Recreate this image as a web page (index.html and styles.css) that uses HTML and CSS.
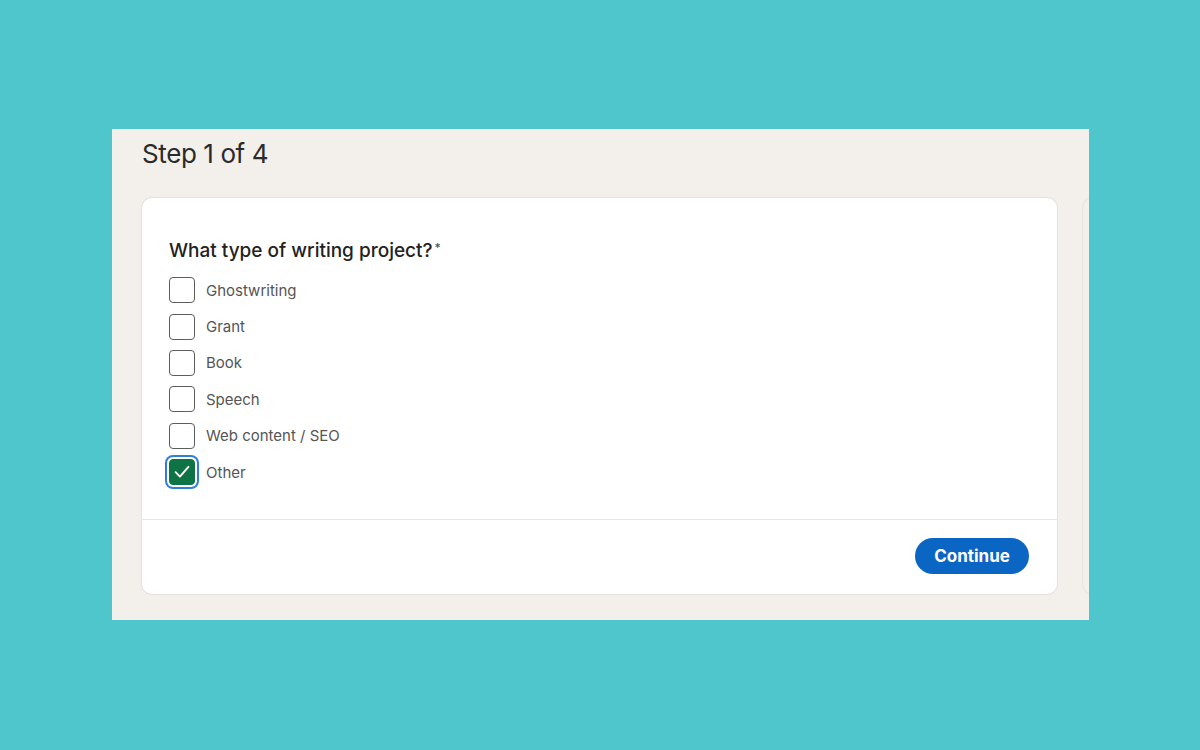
FILE: index.html
```html
<!DOCTYPE html>
<html lang="en">
<head>
    <meta charset="UTF-8">
    <meta name="viewport" content="width=device-width, initial-scale=1.0">
    <title>Step 1 of 4</title>
    <link rel="stylesheet" href="styles.css">
</head>
<body>
    <div class="panel">
        <h1 class="step">Step 1 of 4</h1>
        <div class="cards">
            <div class="card">
                <div class="card-body">
                    <h2 class="question">What type of writing project?<span class="req">*</span></h2>
                    <ul class="options">
                        <li class="option"><span class="box"></span>Ghostwriting</li>
                        <li class="option"><span class="box"></span>Grant</li>
                        <li class="option"><span class="box"></span>Book</li>
                        <li class="option"><span class="box"></span>Speech</li>
                        <li class="option"><span class="box"></span>Web content / SEO</li>
                        <li class="option"><span class="box checked"><svg width="20" height="20" viewBox="0 0 20 20"><path d="M3.6 10.2 L7.9 14.6 L16.4 4.8" fill="none" stroke="#fff" stroke-width="1.9" stroke-linecap="round" stroke-linejoin="round"/></svg></span>Other</li>
                    </ul>
                </div>
                <div class="card-foot">
                    <button class="button">Continue</button>
                </div>
            </div>
            <div class="card next"></div>
        </div>
    </div>
</body>
</html>
```

FILE: styles.css
```css
body {
    margin: 0;
    background-color: #4fc6cb;
    font-family: "Inter", "Liberation Sans", Arial, sans-serif;
    height: 750px;
    overflow: hidden;
}
.panel {
    margin: 129px 0 0 112px;
    width: 977px;
    height: 491px;
    background-color: #f3f0ec;
    box-sizing: border-box;
    padding: 10px 0 0 30px;
    overflow: hidden;
}
.step {
    margin: 0;
    font-size: 26px;
    font-weight: 400;
    color: #2b2b2b;
    letter-spacing: -0.4px;
    line-height: 30px;
}
.cards {
    display: flex;
    gap: 26px;
    margin-top: 29px;
}
.card {
    flex: 0 0 915px;
    height: 396px;
    background-color: #fff;
    border-radius: 10px;
    box-shadow: 0 0 0 1px #e6e3de;
    display: flex;
    flex-direction: column;
}
.card.next {
    flex: 0 0 100px;
    background-color: #f3f0ec;
}
.card-body {
    padding: 38px 27px 0;
    height: 322px;
    box-sizing: border-box;
    border-bottom: 1px solid #e8e6e3;
}
.question {
    margin: 0 0 9px;
    font-size: 19px;
    font-weight: 500;
    color: #222;
    line-height: 24px;
}
.req {
    font-size: 12px;
    vertical-align: 5px;
    margin-left: 2px;
    color: #555;
}
.options {
    list-style: none;
    margin: 0;
    padding: 0;
}
.option {
    display: flex;
    align-items: center;
    gap: 11px;
    height: 36.4px;
    font-size: 15px;
    color: #555;
}
.box {
    width: 26px;
    height: 26px;
    box-sizing: border-box;
    border: 1.5px solid #5d5d5d;
    border-radius: 4px;
    display: flex;
    align-items: center;
    justify-content: center;
}
.box.checked {
    background-color: #0e7445;
    border-color: #0e7445;
    box-shadow: 0 0 0 2px #fff, 0 0 0 4px #2f7ed8;
}
.card-foot {
    flex: 1;
    display: flex;
    justify-content: flex-end;
    align-items: center;
    padding: 0 28px 2px;
}
.button {
    background-color: #0a66c2;
    border: none;
    color: white;
    width: 114px;
    height: 36px;
    font-family: inherit;
    font-size: 17px;
    font-weight: 700;
    border-radius: 18px;
    cursor: pointer;
}
```
